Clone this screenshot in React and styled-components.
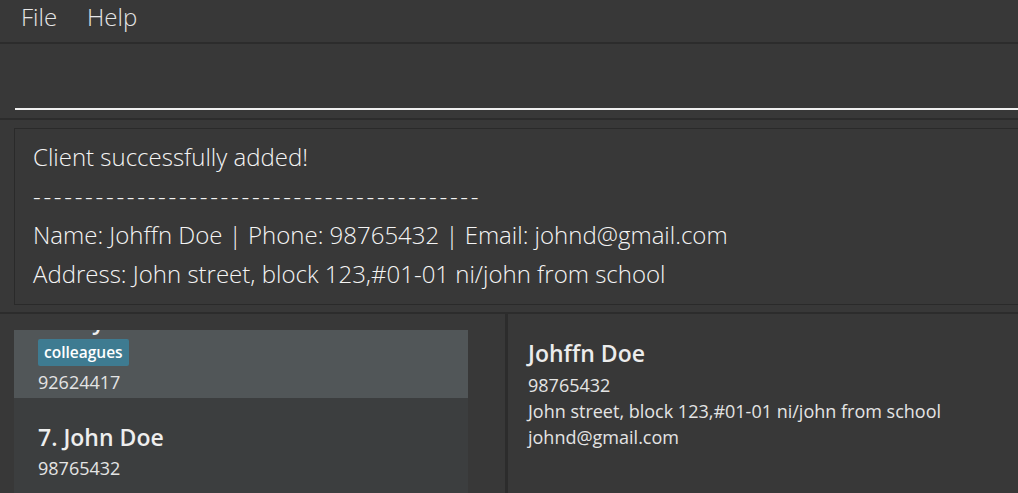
import React from "react";
import styled, { createGlobalStyle } from "styled-components";

const GlobalStyle = createGlobalStyle`
  html, body {
    margin: 0;
    padding: 0;
    background: #383838;
    overflow: hidden;
  }
  body {
    font-family: "Open Sans", "DejaVu Sans", sans-serif;
    color: #e8e8e8;
  }
`;

const Window = styled.div`
  width: 1040px;
  height: 493px;
  display: flex;
  flex-direction: column;
  background: #383838;
`;

const MenuBar = styled.div`
  height: 42px;
  display: flex;
  align-items: center;
  gap: 30px;
  padding-left: 21px;
  border-bottom: 2px solid #2c2c2c;
`;

const MenuItem = styled.span`
  font-size: 24px;
  font-weight: 300;
  color: #e6e6e6;
  padding-bottom: 10px;
`;

const CommandPane = styled.div`
  height: 74px;
  padding: 0 0 0 15px;
  display: flex;
  align-items: flex-end;
  border-bottom: 2px solid #2c2c2c;
`;

const CommandInput = styled.div`
  flex: 1;
  height: 0;
  border-bottom: 2px solid #f0f0f0;
  margin-bottom: 8px;
`;

const ResultPane = styled.div`
  height: 194px;
  padding: 8px 0 0 14px;
  box-sizing: border-box;
  border-bottom: 2px solid #2c2c2c;
`;

const ResultBox = styled.div`
  height: 177px;
  box-sizing: border-box;
  border: 1px solid #2a2a2a;
  padding: 8px 18px;
  font-size: 24px;
  font-weight: 300;
  line-height: 39px;
  color: #f4f4f4;
`;

const ResultLine = styled.div`
  white-space: nowrap;
  letter-spacing: ${(p) => (p.rule ? "2.7px" : "0")};
`;

const Lower = styled.div`
  flex: 1;
  display: flex;
  min-height: 0;
`;

const ListPane = styled.div`
  width: 508px;
  padding: 16px 37px 0 14px;
  box-sizing: border-box;
  border-right: 3px solid #2c2c2c;
`;

const ListView = styled.div`
  height: 100%;
  overflow: hidden;
  background: #3c3e3f;
`;

const ListInner = styled.div`
  margin-top: -49px;
`;

const Cell = styled.div`
  padding: 24px 24px 14px;
  height: 117px;
  box-sizing: border-box;
  background: ${(p) => (p.selected ? "#515658" : "transparent")};
  display: flex;
  flex-direction: column;
  gap: 4px;
`;

const CellName = styled.div`
  font-size: 23px;
  font-weight: 600;
  color: #eeeeee;
  line-height: 30px;
  white-space: nowrap;
`;

const Tags = styled.div`
  display: flex;
  gap: 6px;
`;

const Tag = styled.span`
  background: #3e7b91;
  color: #ffffff;
  font-size: 15.5px;
  font-weight: 600;
  border-radius: 2px;
  padding: 3px 6px 3px;
  line-height: 21px;
`;

const CellPhone = styled.div`
  font-size: 18px;
  color: #e4e4e4;
  line-height: 24px;
`;

const DetailPane = styled.div`
  flex: 1;
  padding: 24px 20px;
  display: flex;
  flex-direction: column;
`;

const DetailName = styled.div`
  font-size: 23px;
  font-weight: 600;
  color: #ececec;
  line-height: 30px;
  margin-bottom: 4px;
`;

const DetailLine = styled.div`
  font-size: 18px;
  color: #e4e4e4;
  line-height: 26px;
  white-space: nowrap;
`;

const clients = [
  { name: "6. Roy Balakrishnan", tags: ["colleagues"], phone: "92624417", selected: true },
  { name: "7. John Doe", tags: [], phone: "98765432" },
];

const App = () => {
  return (
    <Window>
      <GlobalStyle />
      <MenuBar>
        <MenuItem>File</MenuItem>
        <MenuItem>Help</MenuItem>
      </MenuBar>
      <CommandPane>
        <CommandInput />
      </CommandPane>
      <ResultPane>
        <ResultBox>
          <ResultLine>Client successfully added!</ResultLine>
          <ResultLine rule>-------------------------------------------</ResultLine>
          <ResultLine>Name: Johffn Doe | Phone: 98765432 | Email: johnd@gmail.com</ResultLine>
          <ResultLine>Address: John street, block 123,#01-01 ni/john from school</ResultLine>
        </ResultBox>
      </ResultPane>
      <Lower>
        <ListPane>
          <ListView>
            <ListInner>
              {clients.map((c) => (
                <Cell key={c.name} selected={c.selected}>
                  <CellName>{c.name}</CellName>
                  {c.tags.length > 0 && (
                    <Tags>
                      {c.tags.map((t) => (
                        <Tag key={t}>{t}</Tag>
                      ))}
                    </Tags>
                  )}
                  <CellPhone>{c.phone}</CellPhone>
                </Cell>
              ))}
            </ListInner>
          </ListView>
        </ListPane>
        <DetailPane>
          <DetailName>Johffn Doe</DetailName>
          <DetailLine>98765432</DetailLine>
          <DetailLine>John street, block 123,#01-01 ni/john from school</DetailLine>
          <DetailLine>johnd@gmail.com</DetailLine>
        </DetailPane>
      </Lower>
    </Window>
  );
};

export default App;
